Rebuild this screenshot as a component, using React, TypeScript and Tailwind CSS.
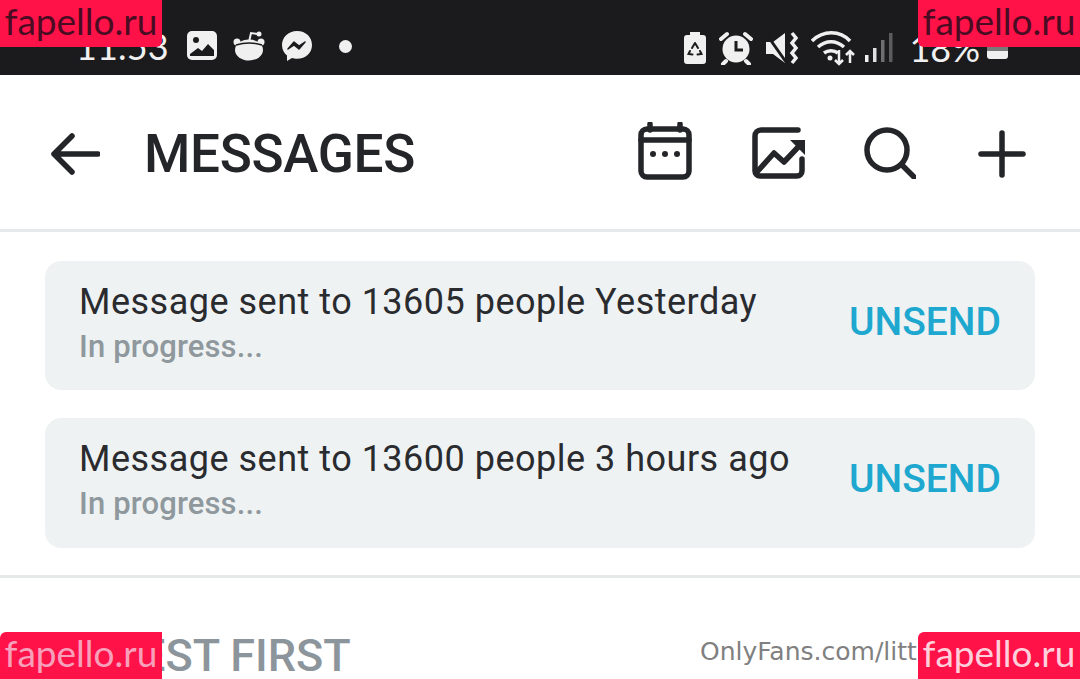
import React from "react";

const Card = ({ title, h, shift }: { title: string; h: string; shift: string }) => (
  <div className={"flex items-center justify-between rounded-[16px] bg-[#eff2f3] pl-[34px] pr-[34px] " + h}>
    <div className={"flex flex-col " + shift}>
      <div className="text-[36px] leading-[44px] tracking-[0.5px] text-[#2a2b2f]">{title}</div>
      <div className="mt-[4px] text-[31px] leading-[38px] font-medium tracking-[0.15px] text-[#8e989d]">In progress...</div>
    </div>
    <div className="pb-[8px] text-[39px] font-medium leading-[44px] text-[#1ea8cf]">UNSEND</div>
  </div>
);

const Mark = ({ className }: { className: string }) => (
  <div className={"absolute flex h-[47px] w-[162px] items-start justify-center bg-[#ff1248] font-['Lato',sans-serif] text-[37px] font-normal leading-[41px] " + className}>
    fapello.ru
  </div>
);

const StatusIcons = () => (
  <div className="flex items-center">
    <svg width="26" height="36" viewBox="0 0 26 34" className="mr-[11px]">
      <path d="M8 1h10v3h3a3 3 0 0 1 3 3v23a3 3 0 0 1-3 3H5a3 3 0 0 1-3-3V7a3 3 0 0 1 3-3h3z" fill="#f0f0f0" />
      <path d="M13 12l-3 5M13 12l3 5M8 20l-1.500 3 4 .5M18 20l1.500 3-4 .5" stroke="#1b1b1d" strokeWidth="2" fill="none" strokeLinecap="round" />
    </svg>
    <svg width="34" height="34" viewBox="0 0 34 34" className="mr-[12px]">
      <circle cx="17" cy="18" r="13.500" fill="#f0f0f0" />
      <path d="M2 8l6-5M32 8l-6-5M7 30l-3 3M27 30l3 3" stroke="#f0f0f0" strokeWidth="4" strokeLinecap="round" />
      <path d="M17 10v9h7" stroke="#1b1b1d" strokeWidth="3" fill="none" />
    </svg>
    <svg width="34" height="34" viewBox="0 0 34 34" className="mr-[12px]">
      <path d="M1 11h7L20 2v30L8 23H1z" fill="#f0f0f0" />
      <path d="M2 4l19 27" stroke="#1b1b1d" strokeWidth="3" />
      <path d="M27 2l4 5-4 5 4 5-4 5 4 5-4 5" stroke="#f0f0f0" strokeWidth="3.500" fill="none" />
    </svg>
    <svg width="46" height="36" viewBox="0 0 46 36" className="mr-[8px]">
      <path d="M1 11c11-11 28-11 38 0M7 17c8-7 18-7 26 0M13 23c4-3 10-3 14 0" stroke="#f0f0f0" strokeWidth="3.500" fill="none" />
      <circle cx="19" cy="28" r="2.500" fill="#f0f0f0" />
      <path d="M28 20v14M24 30l4 4 4-4M39 33V21M35 25l4-4 4 4" stroke="#f0f0f0" strokeWidth="2.500" fill="none" />
    </svg>
    <svg width="28" height="32" viewBox="0 0 28 32" className="mr-[16px]">
      <rect x="0" y="23" width="3.500" height="7" fill="#f0f0f0" />
      <rect x="8" y="16" width="3.500" height="14" fill="#e0e0e0" />
      <rect x="16" y="8" width="3.500" height="22" fill="#6e6e6e" />
      <rect x="24" y="1" width="3.500" height="29" fill="#5c5c5c" />
    </svg>
    <span className="text-[36px] leading-none text-[#f0f0f0] font-['Lato',sans-serif]">18%</span>
    <div className="ml-[7px] mb-[7px] h-[19px] w-[21px] self-end rounded-[3px] bg-[linear-gradient(#7a7a7a_0_60%,#f0f0f0_60%)]" />
  </div>
);

export default function App() {
  return (
    <div className="relative h-[679px] w-[1080px] overflow-hidden bg-white font-['Roboto',sans-serif]">
      <div className="flex h-[75px] items-end justify-between bg-[#1b1b1d] pb-[9px] pl-[76px] pr-[72px]">
        <div className="flex items-center">
          <span className="w-[94px] text-[36px] leading-[40px] text-[#f0f0f0] font-['Lato',sans-serif]">11:53</span>
          <svg width="32" height="30" viewBox="0 0 32 30" className="ml-[16px]">
            <rect width="30" height="29" x="1" rx="5" fill="#f0f0f0" />
            <circle cx="10" cy="9" r="3" fill="#1b1b1d" />
            <path d="M4 23l8-6 4 3 6-7 6 6v6H4z" fill="#1b1b1d" />
          </svg>
          <svg width="32" height="32" viewBox="0 0 32 32" className="ml-[15px]">
            <ellipse cx="16" cy="20" rx="14" ry="10.500" fill="#f0f0f0" />
            <circle cx="4" cy="12" r="3.500" fill="#f0f0f0" />
            <circle cx="28" cy="12" r="3.500" fill="#f0f0f0" />
            <path d="M16 12l2-9 7 1" stroke="#f0f0f0" strokeWidth="2" fill="none" />
            <circle cx="26" cy="4" r="2.500" fill="#f0f0f0" />
            <path d="M3 15q13-4 26 0" stroke="#1b1b1d" strokeWidth="1.500" fill="none" />
          </svg>
          <svg width="32" height="32" viewBox="0 0 32 32" className="ml-[16px]">
            <path d="M16 1C7 1 1 7.500 1 15c0 4.500 2 8 5 10.500V31l5-3c1.500.5 3 .7 5 .7 9 0 15-6 15-13.700S25 1 16 1z" fill="#f0f0f0" />
            <path d="M7 19l6-7 5 4 6-4-6 7-5-4z" fill="#1b1b1d" stroke="#1b1b1d" strokeWidth="1.500" strokeLinejoin="round" />
          </svg>
          <div className="ml-[26px] h-[13px] w-[13px] rounded-full bg-[#f0f0f0]" />
        </div>
        <StatusIcons />
      </div>

      <div className="flex h-[157px] items-center justify-between border-b-[3px] border-[#e6e9ea] pl-[50px] pr-[54px] pt-[4px]">
        <div className="flex items-center">
          <svg width="50" height="44" viewBox="0 0 50 44" fill="none" stroke="#242529" strokeWidth="5.500" strokeLinecap="round" strokeLinejoin="round">
            <path d="M4 22h44M22 4L4 22l18 18" />
          </svg>
          <div className="ml-[44px] text-[53px] font-medium leading-none tracking-[-0.3px] text-[#242529]">MESSAGES</div>
        </div>
        <div className="flex items-center">
          <svg width="54" height="58" viewBox="0 0 54 58" fill="none" stroke="#242529" strokeWidth="5.500" strokeLinecap="round" className="mb-[6px] mr-[1px]">
            <rect x="3" y="7" width="48" height="48" rx="6" />
            <path d="M3 18h48M12 2v6M42 2v6" />
            <g fill="#242529" stroke="none">
              <circle cx="15" cy="32" r="3" /><circle cx="27" cy="32" r="3" /><circle cx="39" cy="32" r="3" />
            </g>
          </svg>
          <svg width="54" height="52" viewBox="0 0 54 52" fill="none" stroke="#242529" strokeWidth="5.500" strokeLinecap="round" strokeLinejoin="round" className="ml-[59px] mb-[3px]">
            <path d="M46 3H9a6 6 0 0 0-6 6v35a5 5 0 0 0 5 5h37a5 5 0 0 0 5-5V32" />
            <path d="M4 46l18-20 10 9 18-19" />
            <path d="M38 13h15v15z" fill="#242529" stroke="none" />
          </svg>
          <svg width="52" height="52" viewBox="0 0 52 52" fill="none" stroke="#242529" strokeWidth="5.500" strokeLinecap="round" className="ml-[58px] mb-[3px]">
            <circle cx="23" cy="23" r="20" />
            <path d="M38 38l12 12" />
          </svg>
          <svg width="48" height="48" viewBox="0 0 48 48" fill="none" stroke="#242529" strokeWidth="5.500" strokeLinecap="round" className="ml-[62px]">
            <path d="M24 3v42M3 24h42" />
          </svg>
        </div>
      </div>

      <div className="flex flex-col gap-[28px] border-b-[3px] border-[#e6e9ea] px-[45px] pb-[27px] pt-[29px]">
        <Card title="Message sent to 13605 people Yesterday" h="h-[129px]" shift="pb-[6px]" />
        <Card title="Message sent to 13600 people 3 hours ago" h="h-[130px]" shift="pb-[7px]" />
      </div>

      <div className="flex items-center justify-between pl-[43px] pr-[24px] pt-[55px]">
        <div className="text-[45px] font-medium leading-none text-[#8c959b]">NEWEST FIRST</div>
      </div>

      <div className="absolute left-[700px] top-[636px] whitespace-nowrap font-['DejaVu_Sans',sans-serif] text-[25px] leading-[32px] text-[#808080]">OnlyFans.com/littlefrecklesx</div>

      <Mark className="left-0 top-0 rounded-br-[6px] text-[#4a0c22]" />
      <Mark className="right-0 top-0 rounded-bl-[6px] text-[#4a0c22]" />
      <Mark className="bottom-0 left-0 rounded-tl-[6px] text-[#f7a0bb]" />
      <Mark className="bottom-0 right-0 rounded-tl-[6px] text-[#ffd0dc]" />
    </div>
  );
}
